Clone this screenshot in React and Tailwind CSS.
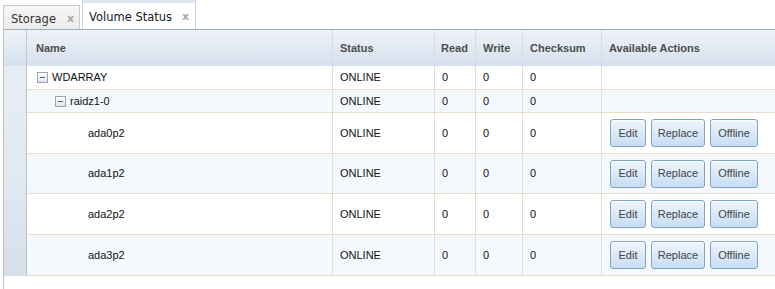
import React from 'react';

const rows = [
  { name: 'WDARRAY', level: 0, expander: true, h: 'h-[24px]' },
  { name: 'raidz1-0', level: 1, expander: true, h: 'h-[23px]' },
  { name: 'ada0p2', level: 2, actions: true, h: 'h-[41px]' },
  { name: 'ada1p2', level: 2, actions: true, h: 'h-[40px]' },
  { name: 'ada2p2', level: 2, actions: true, h: 'h-[41px]' },
  { name: 'ada3p2', level: 2, actions: true, h: 'h-[41px]' },
];

const Expander = () => (
  <span className="w-[11px] h-[11px] border border-[#9aa6b6] bg-gradient-to-b from-white to-[#dfe5ec] flex items-center justify-center">
    <span className="w-[5px] h-px bg-[#5b6778]" />
  </span>
);

const ActionButton = ({ label, w }) => (
  <button
    className={`${w} h-[28px] rounded-[3px] border border-[#7fa2c6] bg-gradient-to-b from-[#eef5fd] to-[#c7ddf4] text-[11px] text-[#444] shadow-[inset_0_1px_0_#fff] flex items-center justify-center`}
  >
    {label}
  </button>
);

const Tab = ({ label, active }) => (
  <div
    className={
      active
        ? 'w-[114px] h-[29px] border border-b-0 border-[#c9d3dd] border-t-[3px] border-t-[#dbe7f4] bg-white flex items-center justify-between pt-[3px] pl-[6px] pr-[6px] text-[#141a2a]'
        : 'w-[77px] h-[24px] border border-b-0 border-[#c8c8c8] bg-gradient-to-b from-[#f7f7f7] to-[#ececec] flex items-center justify-between pt-[4px] pl-[7px] pr-[5px] text-[#333]'
    }
  >
    <span className="text-[11.5px]" style={{ fontFamily: '"DejaVu Sans", Verdana, sans-serif' }}>
      {label}
    </span>
    <span className="text-[11px] font-bold text-[#a8a8a8]" style={{ fontFamily: '"DejaVu Sans", sans-serif' }}>
      x
    </span>
  </div>
);

export default function App() {
  return (
    <div
      className="w-[775px] h-[289px] bg-white overflow-hidden flex flex-col"
      style={{ fontFamily: '"Liberation Sans", Arial, sans-serif' }}
    >
      <div className="h-[29px] flex items-end pl-[3px] gap-[2px]">
        <Tab label="Storage" />
        <Tab label="Volume Status" active />
      </div>

      <div className="flex-1 ml-[3px] border-l border-[#c2c2c2] flex flex-col">
        {/* header */}
        <div className="h-[37px] border-t border-[#a3abb4] bg-gradient-to-b from-[#eef3f8] to-[#d5e1ed] flex text-[11px] font-bold text-[#4d4d4d]">
          <div className="w-[23px] border-r border-[#c0c8d0]" />
          <div className="w-[306px] border-r border-[#d3dde7] pl-[9px] flex items-center">Name</div>
          <div className="w-[102px] border-r border-[#d3dde7] pl-[7px] flex items-center">Status</div>
          <div className="w-[41px] border-r border-[#d3dde7] pl-[6px] flex items-center">Read</div>
          <div className="w-[47px] border-r border-[#d3dde7] pl-[7px] flex items-center">Write</div>
          <div className="w-[79px] border-r border-[#d3dde7] pl-[7px] flex items-center">Checksum</div>
          <div className="flex-1 pl-[7px] flex items-center">Available Actions</div>
        </div>

        {/* body */}
        <div className="flex">
          <div className="w-[23px] border-r border-[#b9c2cb] bg-gradient-to-b from-[#e6edf5] via-[#e1e9f1] to-[#d6dfe8]" />
          <div className="flex-1 flex flex-col">
            {rows.map((r, i) => (
              <div
                key={r.name}
                className={`${r.h} flex border-b border-[#e8dccb] text-[11px] text-[#111] ${i % 2 ? 'bg-[#f5f9fd]' : 'bg-white'}`}
              >
                <div className="w-[306px] border-r border-[#e8dccb] pl-[10px] flex items-center">
                  <span style={{ width: r.level * 18 }} />
                  <span className="w-[11px] mr-[4px] flex">{r.expander && <Expander />}</span>
                  <span>{r.name}</span>
                </div>
                <div className="w-[102px] border-r border-[#e8dccb] pl-[7px] flex items-center">
                  <span style={{ fontFamily: '"Liberation Sans Narrow", "Liberation Sans", sans-serif' }}>ONLINE</span>
                </div>
                <div className="w-[41px] border-r border-[#e8dccb] pl-[7px] flex items-center">0</div>
                <div className="w-[47px] border-r border-[#e8dccb] pl-[7px] flex items-center">0</div>
                <div className="w-[79px] border-r border-[#e8dccb] pl-[7px] flex items-center">0</div>
                <div className="flex-1 pl-[8px] flex items-center gap-[5px]">
                  {r.actions && (
                    <>
                      <ActionButton label="Edit" w="w-[36px]" />
                      <ActionButton label="Replace" w="w-[54px]" />
                      <ActionButton label="Offline" w="w-[48px]" />
                    </>
                  )}
                </div>
              </div>
            ))}
          </div>
        </div>
      </div>
    </div>
  );
}
